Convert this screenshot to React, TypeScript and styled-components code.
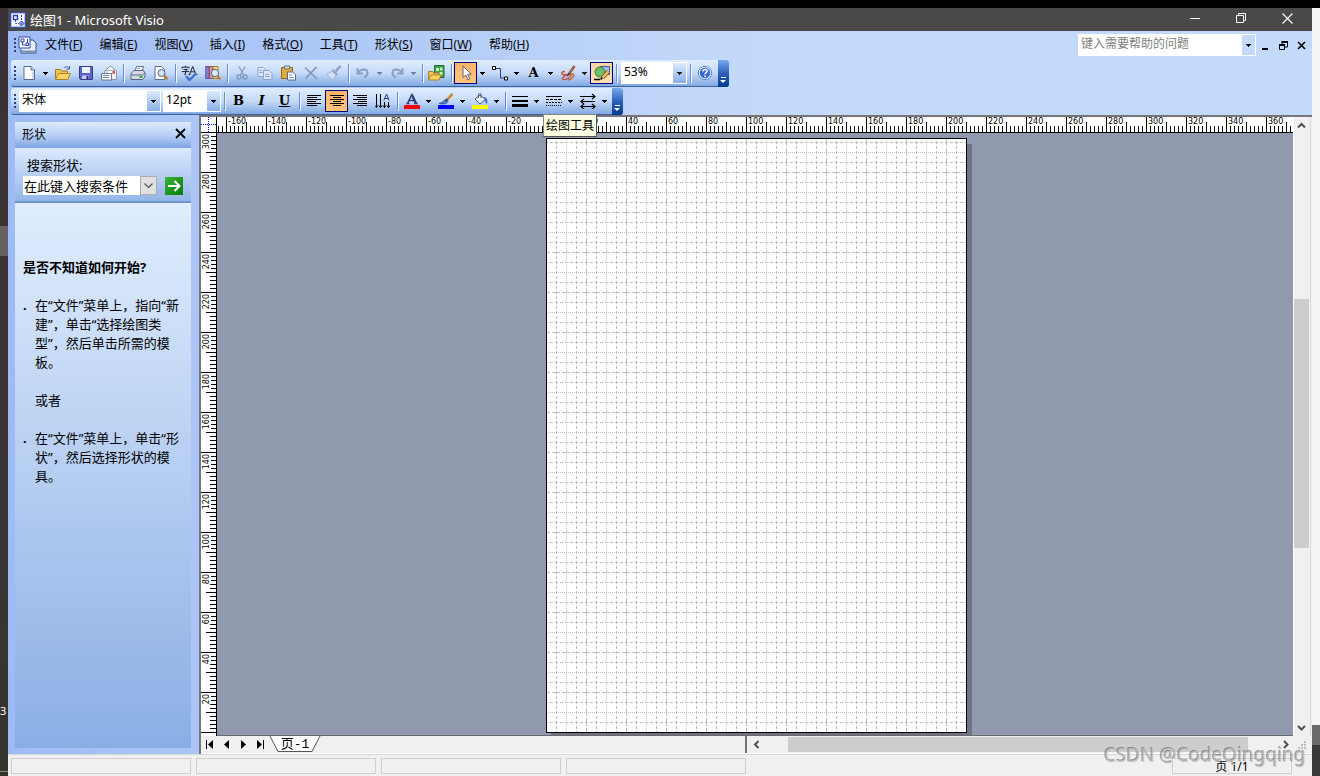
import React from "react";
import styled, { createGlobalStyle, css } from "styled-components";

const Global = createGlobalStyle`
  *, *::before, *::after { box-sizing: border-box; }
  body { margin: 0; background: #000; font: 12px/16px "Noto Sans", "Noto Sans CJK SC", sans-serif; color: #000; }
  button, input, select { font: inherit; color: inherit; border: 0; padding: 0; margin: 0; background: none; border-radius: 0; outline: 0; }
  button { display: flex; align-items: center; justify-content: center; }
  svg { display: block; flex: none; }
  h2, p, ul { margin: 0; padding: 0; font-size: inherit; }
`;

/* ---------- desktop and window frame ---------- */
const Desktop = styled.div`
  display: flex; height: 100vh; padding-top: 8px; position: relative; overflow: hidden;
`;
const LeftEdge = styled.div`
  width: 8px; flex: none; display: flex; flex-direction: column; overflow: hidden;
  background: linear-gradient(#393135, #3b3434 40%, #34352f); color: #fff; font-size: 11px;
`;
const EdgeBand = styled.div<{ $h?: number; $bg?: string }>`
  height: ${p => (p.$h ? p.$h + "px" : "auto")}; flex: ${p => (p.$h ? "none" : "1")};
  background: ${p => p.$bg ?? "transparent"};
`;
const RightEdge = styled.div`
  width: 8px; flex: none; display: flex; flex-direction: column; background: #f5f5f5;
`;
const Window = styled.div`
  flex: 1; min-width: 0; display: flex; flex-direction: column; background: #f0f0f0;
`;

const TitleBar = styled.header`
  height: 23px; flex: none; display: flex; align-items: center; background: #4b4947; color: #fff; padding: 0 2px;
`;
const Title = styled.h1`
  margin: 0 0 0 4px; flex: 1; font-size: 13px; font-weight: 400; line-height: 16px;
`;
const CaptionButton = styled.button`
  width: 46px; height: 23px; color: #fff; padding-bottom: 2px;
`;

const Chrome = styled.div`
  background: linear-gradient(90deg, #9ebbf4, #c4dafa 58%); flex: none; height: 84px; padding-left: 3px; position: relative;
`;
const MenuBar = styled.nav`
  height: 28px; display: flex; align-items: center; padding: 0 2px 0 3px;
`;
const Menus = styled.div`display: flex; gap: 1px;`;
const MenuItem = styled.button`
  padding: 0 8px; height: 20px; white-space: nowrap;
`;
const Spacer = styled.div`flex: 1;`;
const HelpBox = styled.div`
  width: 178px; height: 22px; background: #fff; padding: 1px; display: flex;
`;
const HelpInput = styled.input`
  flex: 1; min-width: 0; padding: 0 2px 3px;
  &::placeholder { color: #808080; opacity: 1; }
`;
const HelpDrop = styled.button`
  width: 13px; height: 20px; background: #c4dafa;
`;
const DocButton = styled.button`
  width: 18px; height: 20px;
`;

/* ---------- toolbars ---------- */
const Grip = styled.span`
  width: 3px; height: 17px; flex: none; align-self: center;
  background: repeating-linear-gradient(#27418f 0 2px, transparent 2px 4px) 0 1px / 2px 16px no-repeat;
`;
const Toolbar = styled.div`
  width: max-content; height: 27px; margin-top: 1px; display: flex; align-items: center;
  background: linear-gradient(#e0edfe, #c5daf8 50%, #82a9e3); border-bottom: 1px solid #3b619c;
  border-radius: 3px; padding-left: 3px;
`;
const ToolButton = styled.button<{ $on?: "checked" | "hot" }>`
  width: 23px; height: 22px; flex: none; position: relative;
  ${p => p.$on && css`
    border: 1px solid #000080;
    background: ${p.$on === "checked" ? "linear-gradient(#fdb46a, #ffc47c)" : "linear-gradient(#fbd3a0, #ffe0b4)"};
  `}
`;
const DropButton = styled.button`width: 11px; height: 22px; flex: none;`;
const Sep = styled.span`
  width: 6px; height: 19px; flex: none;
  background: linear-gradient(#6a8ccb 0 0) 3px 0 / 1px 18px no-repeat, linear-gradient(#f1f9ff 0 0) 4px 1px / 1px 18px no-repeat;
`;
const Cap = styled.button`
  width: 11px; height: 27px; flex: none; margin: 0 0 -1px 2px; align-items: flex-end; padding-bottom: 3px;
  background: linear-gradient(#76a7f2, #2d5fb8 50%, #003b8d); border-radius: 0 3px 3px 0;
`;
const ComboBox = styled.span<{ $w: number }>`
  width: ${p => p.$w}px; height: 22px; flex: none; margin-left: 2px; padding: 1px; background: #fff; position: relative; display: flex;
`;
const ComboSelect = styled.select`
  appearance: none; flex: 1; padding: 0 14px 2px 2px; line-height: 18px;
`;
const ComboArrow = styled.span`
  position: absolute; right: 1px; top: 1px; width: 13px; height: 20px; pointer-events: none;
  display: flex; align-items: center; justify-content: center; background: linear-gradient(#dcebfe, #8aafe6);
`;
const Tooltip = styled.span`
  position: absolute; left: -48px; top: 51px; z-index: 5; height: 23px; padding: 2px 2px; background: #ffffe1;
  border: 1px solid #8a8a80; border-right-color: #555; border-bottom-color: #555; white-space: nowrap; line-height: 17px;
`;

/* ---------- work area ---------- */
const Work = styled.main`
  flex: 1; min-height: 0; display: flex;
`;
const Pane = styled.aside`
  width: 191px; flex: none; padding: 7px 8px 6px 7px; display: flex; flex-direction: column;
  background: linear-gradient(90deg, #9ebbf4, #abc6f7);
`;
const PaneHead = styled.div`
  height: 26px; display: flex; align-items: center; justify-content: space-between; padding: 0 4px 0 7px;
  background: linear-gradient(#dceafd, #b9d1f7 50%, #7ea5e2);
`;
const PaneTitle = styled.h2`font-weight: 400;`;
const PaneClose = styled.button`width: 14px; height: 20px; padding-bottom: 3px;`;
const SearchArea = styled.form`
  height: 55px; padding: 8px 8px 0; border-bottom: 2px solid #6f96d3; font-size: 13px; line-height: 18px;
  background: linear-gradient(#dceafd, #94b5ea);
`;
const SearchLabel = styled.label`display: block; padding-left: 4px; height: 20px;`;
const SearchRow = styled.div`display: flex; align-items: center;`;
const SearchInput = styled.input`
  flex: 1; min-width: 0; height: 19px; background: #fff; padding: 0 1px 1px;
`;
const SearchDrop = styled.button`
  width: 17px; height: 19px; background: #e1e1e1; border: 1px solid #adadad;
`;
const Go = styled.button`
  width: 18px; height: 18px; margin-left: 8px; background: linear-gradient(135deg, #3cb43c, #067a06);
`;
const PaneBody = styled.div`
  flex: 1; padding: 55px 4px 0 8px; font-size: 13px; line-height: 19px;
  background: linear-gradient(#e0edfe, #8aaee4);
`;
const HintList = styled.ul`
  list-style: none; padding-top: 19px;
`;
const Hint = styled.li<{ $dot?: boolean }>`
  display: flex; margin-bottom: 19px;
  &::before { content: "${p => (p.$dot ? "." : "")}"; width: 12px; flex: none; font-weight: 700; }
`;

const Document = styled.section`
  flex: 1; min-width: 0; display: flex; flex-direction: column; border-top: 2px solid #76767a; border-left: 2px solid #76767a;
`;
const Row = styled.div<{ $grow?: boolean }>`
  display: flex; min-height: 0; flex: ${p => (p.$grow ? "1" : "none")};
`;
const Drawing = styled.div`flex: 1; min-width: 0; display: flex; flex-direction: column;`;
const HRuler = styled.div`
  flex: 1; min-width: 0; height: 16px; display: flex; overflow: hidden; background: #fff; border-bottom: 1px solid #000;
`;
const rulerFont = css`font: 8px/8px "DejaVu Sans", sans-serif;`;
const HCell = styled.span<{ $part?: boolean }>`
  ${rulerFont}
  flex: none; display: flex; align-items: flex-start; padding: 1px 0 0 2px;
  width: ${p => (p.$part ? 9 : 40)}px; height: 15px;
  background:
    linear-gradient(#000 0 0) ${p => (p.$part ? -40 : 0)}px 0 / 1px 15px no-repeat,
    linear-gradient(#000 0 0) ${p => (p.$part ? -40 : 20)}px 5px / 1px 10px no-repeat,
    repeating-linear-gradient(90deg, #000 0 1px, transparent 1px 4px) ${p => (p.$part ? 1 : 0)}px 9px / 100% 6px no-repeat;
`;
const HText = styled.span`height: 8px; background: #fff;`;
const Corner = styled.span`
  width: 16px; height: 16px; flex: none; border-right: 1px solid #000; border-bottom: 1px solid #000;
  background:
    repeating-linear-gradient(90deg, #00f 0 1px, transparent 1px 2px) 0 7px / 15px 1px no-repeat,
    repeating-linear-gradient(#00f 0 1px, transparent 1px 2px) 7px 0 / 1px 15px no-repeat, #fff;
`;
const VRuler = styled.div`
  width: 16px; flex: none; overflow: hidden; background: #fff; border-right: 1px solid #000;
`;
const VCell = styled.div<{ $first?: boolean }>`
  ${rulerFont}
  height: ${p => (p.$first ? 39 : 40)}px; display: flex; padding: ${p => (p.$first ? 1 : 2)}px 0 0 2px; color: #000;
  background:
    linear-gradient(#000 0 0) 0 ${p => (p.$first ? -1 : 0)}px / 15px 1px no-repeat,
    linear-gradient(#000 0 0) 5px ${p => (p.$first ? 19 : 20)}px / 10px 1px no-repeat,
    repeating-linear-gradient(#000 0 1px, transparent 1px 4px) 9px ${p => (p.$first ? -1 : 0)}px / 6px 41px no-repeat;
`;
const VText = styled.span`
  writing-mode: vertical-rl; transform: rotate(180deg); width: 8px; height: max-content; background: #fff;
`;
const Canvas = styled.div`
  flex: 1; min-width: 0; background: #9199ae; overflow: hidden; border-bottom: 1px solid #6b6b6b;
`;
const Sheet = styled.div`
  width: 421px; height: 595px; margin: 5px 0 0 329px; background: #fff; border: 1px solid #000; box-shadow: 5px 6px 0 #6f7488;
`;
const VScroll = styled.div`
  width: 19px; flex: none; display: flex; flex-direction: column; background: #f0f0f0; border-left: 1px solid #fff;
  border-right: 1px solid #f0f0f0; box-shadow: inset -1px 0 #dcdcdc; padding-right: 2px;
`;
const ScrollButton = styled.button<{ $wide?: boolean }>`
  width: ${p => (p.$wide ? 17 : 15)}px; height: ${p => (p.$wide ? 15 : 17)}px; flex: none; color: #505050;
`;
const Track = styled.div<{ $dir: "row" | "column" }>`
  flex: 1; display: flex; flex-direction: ${p => p.$dir};
`;
const Part = styled.span<{ $n: number; $thumb?: boolean }>`
  flex: ${p => p.$n} 1 0; background: ${p => (p.$thumb ? "#cdcdcd" : "transparent")};
`;
const TabRow = styled.div`
  height: 18px; flex: none; display: flex; background: #f0f0f0; border-bottom: 1px solid #fff;
`;
const TabSide = styled.div`
  flex: 0 0 546px; display: flex; border-right: 2px solid #76767a;
`;
const NavButton = styled.button`width: 17px; height: 16px;`;
const Tab = styled.button`
  position: relative; width: 52px; height: 16px; font: 13px/15px "Liberation Mono", "Noto Sans CJK SC", monospace;
  span { position: relative; }
  svg { position: absolute; left: 0; top: 0; }
`;
const HScroll = styled.div`flex: 1; display: flex; padding: 1px 0 1px 1px;`;
const SizeGrip = styled.span`
  width: 16px; flex: none; display: flex; align-items: center; justify-content: center; margin-right: 2px;
`;

const StatusBar = styled.footer`
  height: 22px; flex: none; border-top: 1px solid #d7d7d7; display: flex; gap: 5px; padding: 3px 20px 2px 3px;
`;
const StatusCell = styled.span<{ $w: number }>`
  width: ${p => p.$w}px; border: 1px solid #d0d0d0; flex: none; text-align: center; white-space: nowrap;
`;
const Watermark = styled.span`
  position: absolute; right: 14px; bottom: 7px; font-size: 19px; line-height: 28px; color: rgba(190, 190, 190, 0.85);
  text-shadow: -1px -1px 0 rgba(90, 90, 90, 0.6); pointer-events: none; white-space: nowrap;
`;

/* ---------- icons ---------- */
const Ico = ({ children, w = 16, h = 16 }: { children: React.ReactNode; w?: number; h?: number }) => (
  <svg width={w} height={h} viewBox={`0 0 ${w} ${h}`} fill="none" aria-hidden="true">{children}</svg>
);
const Tri = ({ c = "#000" }: { c?: string }) => (
  <svg width="5" height="3" viewBox="0 0 5 3" shapeRendering="crispEdges" aria-hidden="true"><path d="M0 0h5v1h-1v1h-1v1h-1v-1h-1v-1h-1z" fill={c} /></svg>
);
const Chevron = ({ d }: { d: string }) => (
  <Ico w={9} h={9}><path d={d} stroke="currentColor" strokeWidth="2" /></Ico>
);

const icons: Record<string, React.ReactNode> = {
  new: <Ico><path d="M3 1.500h7l3.500 3.500v9.500H3z" fill="#fff" stroke="#5b6c92" /><path d="M10 1.500V5h3.500" fill="#ccd8ee" stroke="#5b6c92" /><path d="M12 6.500v7" stroke="#c9d6f0" strokeWidth="2" /></Ico>,
  open: <Ico><path d="M.5 14V4.500h5l1 1.500h6v3" fill="#f0c65c" stroke="#a97a1c" /><path d="M.6 14.500 3.500 8.500h12l-3 6z" fill="#fbd468" stroke="#b5811d" /><path d="M9 3c2-2 4-1.500 5 .5M14.500 1v3h-3" stroke="#47628e" /></Ico>,
  save: <Ico><path d="M1.500 1.500h13v13h-12l-1-1z" fill="#5a63c8" stroke="#36398f" /><path d="M4 2h8v6H4z" fill="#eef3ff" /><path d="M4 10.500h7V14H4z" fill="#c7cfe9" /><path d="M8.500 11h2v3h-2z" fill="#2b2f7a" /></Ico>,
  mail: <Ico><path d="M3.500 6 9.500 1l6 5v8.500h-12z" fill="#f3f4f6" stroke="#8992a6" /><path d="M5.500 5.500h8v3h-8z" fill="#fff" stroke="#a5adbd" /><path d="M11.500 6h2.500v2.500h-2.500z" fill="#d0543c" /><path d="M.5 8.500h10v6.500H.5z" fill="#fff" stroke="#6b7894" /><path d="M2 10.500h6M2 12.500h6" stroke="#7384ae" /></Ico>,
  print: <Ico><path d="M5 6 6.500 1.500h7L12 6.500" fill="#fff" stroke="#5f6e8e" /><path d="M1 8.500 4 5.500h9.500L15 8v4l-2.500 2.500H1z" fill="#d5dae6" stroke="#5a6683" /><path d="M1 10h11.500L15 8" stroke="#5a6683" /><path d="M9.500 11h3v2h-3z" fill="#26b430" /><path d="M6.500 3.500h4" stroke="#a6b2cc" /></Ico>,
  preview: <Ico><path d="M2 1.500h6.500l3 3v10H2z" fill="#fff" stroke="#5b6c92" /><circle cx="8.500" cy="8" r="3.500" fill="#cfe4fa" stroke="#566582" /><path d="m11.200 10.800 3.300 3.400" stroke="#c47a2c" strokeWidth="2.400" /></Ico>,
  spell: <Ico w={18}><path d="M1 3.500V2.200h7v1.300M4.500.8v1.400M2.500 4.500h4L4.500 6v3.300H3.200M.8 6.600h7.500" stroke="#1c2440" /><path d="m8.500 9.500 3.200-8 3.200 8M9.700 6.800h4M7.500 9.500h2M14 9.500h2.500" stroke="#1c2440" /><path d="m5 11 3.500 4L15 8.500" stroke="#3f6fc8" strokeWidth="2.400" /></Ico>,
  research: <Ico><path d="M.8 1.500h3.400v12H.8z" fill="#8a7fd0" stroke="#554a9c" /><path d="M4.500 1.500h3.200v12H4.500z" fill="#d99aa5" stroke="#8c4c62" /><path d="M8 1.500h5v12H8z" fill="#efd28a" stroke="#a58036" /><circle cx="10" cy="8" r="3.600" fill="#dcecfb" stroke="#566582" /><path d="m12.500 11 2.700 3.400" stroke="#c47a2c" strokeWidth="2.200" /></Ico>,
  cut: <Ico><path d="M5 1.500 9.500 10M11 1.500 6.500 10" stroke="#8e9fc4" strokeWidth="1.400" /><circle cx="5" cy="12" r="2" stroke="#8496bf" strokeWidth="1.400" /><circle cx="11" cy="12" r="2" stroke="#8496bf" strokeWidth="1.400" /></Ico>,
  copy: <Ico><path d="M1 2.500h5.500l2.500 2.500v6.500H1z" fill="#dbe6f8" stroke="#93a5cb" /><path d="M6.500 5.500H12l3 3v6H6.500z" fill="#dbe6f8" stroke="#93a5cb" /><path d="M2.500 5.500h3M2.500 7.500h3M8 9.500h4M8 11.500h5" stroke="#93a5cb" /></Ico>,
  paste: <Ico><path d="M1.500 2.500h11v11h-11z" fill="#e3ac3a" stroke="#93661a" /><path d="M4.500 1h5v3h-5z" fill="#d9dde6" stroke="#6d7078" /><path d="M7.500 7h5l3 2.500V15h-8z" fill="#fff" stroke="#53658e" /><path d="M9 10h3.500M9 12.500h5" stroke="#7f93c2" /></Ico>,
  delete: <Ico><path d="M2 2.500 14 14M13.500 2 2.500 13.500" stroke="#8195c0" strokeWidth="1.700" /></Ico>,
  brush: <Ico><path d="m14.500 1-5 5.500" stroke="#8fa1c8" strokeWidth="2.600" /><path d="m7 4 5 5-1.500 1.500L6 5.500z" fill="#8fa1c8" /><path d="M5.500 6 10 10.500 6.500 15 1 9.500z" fill="#d5e1f4" stroke="#9badd0" /></Ico>,
  undo: <Ico><path d="M2.500 3v5.500H8M3 8c2-4 9-5 9.500-.5.200 2.500-1.500 4-3.500 5" stroke="#8a9fca" strokeWidth="2" /></Ico>,
  redo: <Ico><path d="M13.500 3v5.500H8M13 8c-2-4-9-5-9.500-.5-.2 2.500 1.500 4 3.500 5" stroke="#8a9fca" strokeWidth="2" /></Ico>,
  shapes: <Ico w={17}><path d="M6.500.5h9.500v12H6.500z" fill="#3da24b" stroke="#1d6b2c" /><path d="M8 3h3v3H8zM12 2.500h2.500v3H12zM11.500 7h3v3h-3z" fill="#c9f0b8" /><path d="M.7 14.500V6.500h4l1 1.500h5v2" fill="#f0c65c" stroke="#a97a1c" /><path d="m.8 15 2.500-5h10l-2.500 5z" fill="#fbd468" stroke="#b5811d" /></Ico>,
  pointer: <Ico><path d="M5 1v11.500l2.700-2.500 2 4.800 2-.9-2-4.700 3.600-.1z" fill="#fff" stroke="#5f6575" /></Ico>,
  connector: <Ico w={18}><path d="M4 3.500h5.500v9.500h4" stroke="#1f3d88" /><path d="M1.500 1.500h3v3h-3zM13.500 12h3v3h-3z" fill="#fff" stroke="#000" /></Ico>,
  ink: <Ico><path d="M5 6.500C2 6 .5 9 3 9.500s7-1 8 .5-5 5-7.500 4.500S3 11 8 9.500s7.500 0 5 2.500-4.500 3-5.500 2.500" stroke="#c85840" strokeWidth="1.400" /><path d="m14.500 1-5.500 8" stroke="#a85e3e" strokeWidth="2.600" /><path d="m9.400 8.200-2 3" stroke="#4b3c38" strokeWidth="1.500" /></Ico>,
  drawing: <Ico w={18}><path d="M7.500 1.500h9v8h-9z" fill="#9fc0f0" stroke="#3c5f9f" /><circle cx="7" cy="7" r="5" fill="#6fc06b" stroke="#2f7d39" /><path d="M1 14.500h6" stroke="#000" strokeWidth="1.500" /><path d="m15.500 6.500-6 6" stroke="#7d5a22" strokeWidth="4" /><path d="m15.500 6.500-6 6" stroke="#f0c272" strokeWidth="2.400" /><path d="m9.500 12.500-2 2" stroke="#000" strokeWidth="1.500" /></Ico>,
  help: <Ico><circle cx="8" cy="8" r="6.700" fill="#fff" stroke="#5b83cd" /><circle cx="8" cy="8" r="5.400" fill="#3c70d0" /><path d="M6 6.400c0-2.800 4.200-2.500 4.200-.3 0 1.500-2.100 1.500-2.100 3.200M8.100 10.500v1.500" stroke="#fff" strokeWidth="1.500" /></Ico>,
  left: <Ico><path d="M1 2.500h14M1 4.500h10M1 6.500h14M1 8.500h9M1 10.500h14M1 12.500h10" stroke="#000" /></Ico>,
  center: <Ico><path d="M1 2.500h14M4 4.500h8M1 6.500h14M4 8.500h8M1 10.500h14M4 12.500h8" stroke="#000" /></Ico>,
  right: <Ico><path d="M1 2.500h14M5 4.500h10M1 6.500h14M6 8.500h9M1 10.500h14M5 12.500h10" stroke="#000" /></Ico>,
  vertical: <Ico><path d="M1.500 1v13M5.500 1v13M9.500 9v6M13.500 9v6" stroke="#000" /><path d="m0 12.500 1.500 2 1.500-2M4 12.500l1.500 2 1.500-2M8 12.500l1.500 2 1.500-2M12 12.500l1.500 2 1.500-2" stroke="#000" /><path d="m8.800 7.500 2.700-6.500 2.700 6.500M9.800 5.500h3.400" stroke="#26417f" /></Ico>,
  fontColor: <Ico><path d="m3.500 10.500 4.300-9 4.300 9M5.300 7.500h5.200M2.500 10.500h3M10 10.500h3.500" stroke="#2a4380" strokeWidth="1.500" /><path d="m8 2 4 8.500" stroke="#2a4380" strokeWidth="2.400" /><path d="M0 12h16v4H0z" fill="#f00" /></Ico>,
  lineColor: <Ico><path d="M1 10.500c4-.5 4-3 7-4l2 2c-2 3-5 2.500-9 2z" fill="#4d83d8" stroke="#2b4f98" /><path d="m14.500.8-6 6.500" stroke="#c98b35" strokeWidth="2.600" /><path d="m9.500 6-2 2.500" stroke="#32507f" strokeWidth="2" /><path d="M0 12h16v4H0z" fill="#00f" /></Ico>,
  fill: <Ico><path d="m3 6 5-4 5.500 4.500-5.500 4.500z" fill="#e9eef7" stroke="#44597f" /><path d="M6.500 5V1.500c0-1.500 2.500-1.500 2.500 0V5" stroke="#44597f" /><path d="M12 4c3 .5 4 3 3 7-1.500-.5-2-3-2.500-4.500z" fill="#3f75cf" /><path d="M0 12h16v4H0z" fill="#ff0" /></Ico>,
  weight: <Ico><path d="M0 3.500h16" stroke="#000" /><path d="M0 8h16" stroke="#000" strokeWidth="2" /><path d="M0 12.500h16" stroke="#000" strokeWidth="3" /></Ico>,
  pattern: <Ico><path d="M0 3.500h16" stroke="#000" /><path d="M0 6.500h16" stroke="#000" strokeDasharray="3 1" /><path d="M0 9.500h16" stroke="#000" strokeDasharray="2 1" /><path d="M0 12.500h16" stroke="#000" strokeDasharray="1 1" /></Ico>,
  ends: <Ico><path d="M0 3.500h15M1 8.500h14M1 13.500h14" stroke="#000" /><path d="m12 1 3 2.500L12 6M4 6 1 8.500 4 11M4 11 1 13.500 4 16M12 11l3 2.500-3 2.500" stroke="#000" strokeWidth="1.200" /></Ico>,
};
const CapGlyph = () => <Ico w={7} h={8}><path d="M1 1.500h5" stroke="#fff" /><path d="M0 4h6L3 7z" fill="#fff" /></Ico>;

const LetterFace = styled.span<{ $i?: boolean; $u?: boolean }>`
  font: ${p => (p.$i ? "italic " : "")}700 13px/16px "DejaVu Serif", serif;
  text-decoration: ${p => (p.$u ? "underline" : "none")};
`;

/* ---------- small compositions ---------- */
const Tool = ({ icon, label, drop, dim, on, children }: {
  icon?: string; label: string; drop?: boolean; dim?: boolean; on?: "checked" | "hot"; children?: React.ReactNode;
}) => (
  <>
    <ToolButton type="button" aria-label={label} $on={on}>{icon ? icons[icon] : null}{children}</ToolButton>
    {drop && <DropButton type="button" aria-label={label + "选项"}><Tri c={dim ? "#6c7fa8" : "#000"} /></DropButton>}
  </>
);
const Combo = ({ label, value, w }: { label: string; value: string; w: number }) => (
  <ComboBox $w={w}>
    <ComboSelect aria-label={label} defaultValue={value}><option>{value}</option></ComboSelect>
    <ComboArrow><Tri /></ComboArrow>
  </ComboBox>
);

const menus: [string, string][] = [
  ["文件", "F"], ["编辑", "E"], ["视图", "V"], ["插入", "I"], ["格式", "O"], ["工具", "T"], ["形状", "S"], ["窗口", "W"], ["帮助", "H"],
];
const hLabels = Array.from({ length: 27 }, (_, i) => -160 + i * 20);
const vLabels = Array.from({ length: 16 }, (_, i) => 300 - i * 20);

const GridLines = () => (
  <svg width="419" height="593" shapeRendering="crispEdges" aria-hidden="true">
    <defs>
      <pattern id="grid" width="40" height="40" patternUnits="userSpaceOnUse" patternTransform="translate(-1 -7)">
        <g stroke="#c0c0c0" fill="none">
          <path d="M.5 0v40M0 .5h40" strokeDasharray="8 2" strokeDashoffset="4" />
          <path d="M10.500 0v40M30.500 0v40M0 10.500h40M0 30.500h40" strokeDasharray="3 2" strokeDashoffset="1" />
          <path d="M20.500 0v40M0 20.500h40" strokeDasharray="1 1" />
        </g>
      </pattern>
    </defs>
    <rect width="419" height="593" fill="url(#grid)" />
  </svg>
);

export default function App() {
  return (
    <Desktop>
      <Global />
      <LeftEdge>
        <EdgeBand $h={218} />
        <EdgeBand $h={30} $bg="#656162" />
        <EdgeBand $h={447} />
        <span>3</span>
        <EdgeBand />
        <EdgeBand $h={1} $bg="#8a8a86" />
        <EdgeBand $h={4} />
      </LeftEdge>

      <Window>
        <TitleBar>
          <Ico><path d="M0 0h16v16H0z" fill="#3550b5" /><path d="M1.500 1.500h13v13h-13z" fill="#fff" stroke="#b9c6f2" /><path d="M3.500 3.500h4v4h-4z" stroke="#2c45b0" strokeWidth="1.500" /><path d="M5.500 8v3.500h3M11.500 3v6" stroke="#2c45b0" strokeDasharray="2 1" /><path d="m11.500 9 2.500 2.500-2.500 2.500L9 11.500z" fill="#7d94e6" stroke="#2c45b0" /></Ico>
          <Title>绘图1 - Microsoft Visio</Title>
          <CaptionButton type="button" aria-label="最小化"><Ico w={11} h={11}><path d="M0 5.500h10" stroke="#fff" /></Ico></CaptionButton>
          <CaptionButton type="button" aria-label="向下还原"><Ico w={11} h={11}><path d="M.5 2.500h7v7h-7zM2.500 2.500V.5h7v7h-2" stroke="#fff" /></Ico></CaptionButton>
          <CaptionButton type="button" aria-label="关闭"><Ico w={11} h={11}><path d="m.5.5 10 10M10.500.5l-10 10" stroke="#fff" strokeWidth="1.200" /></Ico></CaptionButton>
        </TitleBar>

        <Chrome>
          <MenuBar>
            <Grip />
            <Ico w={20} h={18}><path d="M7 4h9l3 3v10H4v-4" fill="#e8eefc" stroke="#36507f" /><path d="M5 15.500h13" stroke="#7d8fb8" strokeWidth="2" /><path d="M2 1h11v11H2z" fill="#fff" stroke="#2c45b0" /><path d="M4 3h3v3H4zM9 7h2.500v2.500H9zM5.500 6v3H9M10.500 3v4" stroke="#2c45b0" /></Ico>
            <Menus>
              {menus.map(([t, k]) => <MenuItem type="button" key={k}>{t}(<u>{k}</u>)</MenuItem>)}
            </Menus>
            <Spacer />
            <HelpBox>
              <HelpInput aria-label="帮助" placeholder="键入需要帮助的问题" />
              <HelpDrop type="button" aria-label="帮助选项"><Tri /></HelpDrop>
            </HelpBox>
            <DocButton type="button" aria-label="最小化文档"><Ico w={8} h={9}><path d="M1 7h6v2H1z" fill="#000" /></Ico></DocButton>
            <DocButton type="button" aria-label="还原文档"><Ico w={9} h={9}><path d="M3 1h5.500v5H6M3 0v3M.5 4h5v4.500h-5z" stroke="#000" /><path d="M3 1h6M0 4h6" stroke="#000" strokeWidth="2" /></Ico></DocButton>
            <DocButton type="button" aria-label="关闭文档"><Ico w={9} h={9}><path d="m1 1 7 7M8 1 1 8" stroke="#000" strokeWidth="1.600" /></Ico></DocButton>
          </MenuBar>

          <Toolbar role="toolbar" aria-label="常用">
            <Grip />
            <Tool icon="new" label="新建" drop />
            <Tool icon="open" label="打开" />
            <Tool icon="save" label="保存" />
            <Tool icon="mail" label="电子邮件" />
            <Sep />
            <Tool icon="print" label="打印" />
            <Tool icon="preview" label="打印预览" />
            <Sep />
            <Tool icon="spell" label="拼写检查" />
            <Tool icon="research" label="信息检索" />
            <Sep />
            <Tool icon="cut" label="剪切" />
            <Tool icon="copy" label="复制" />
            <Tool icon="paste" label="粘贴" />
            <Tool icon="delete" label="删除" />
            <Tool icon="brush" label="格式刷" />
            <Sep />
            <Tool icon="undo" label="撤消" drop dim />
            <Tool icon="redo" label="恢复" drop dim />
            <Sep />
            <Tool icon="shapes" label="形状" />
            <Sep />
            <Tool icon="pointer" label="指针工具" drop on="checked" />
            <Tool icon="connector" label="连接线工具" drop />
            <Tool label="文本工具" drop><LetterFace>A</LetterFace></Tool>
            <Tool icon="ink" label="墨迹工具" drop />
            <Tool icon="drawing" label="绘图工具" on="hot"><Tooltip role="tooltip">绘图工具</Tooltip></Tool>
            <Sep />
            <Combo label="显示比例" value="53%" w={66} />
            <Sep />
            <Tool icon="help" label="帮助" />
            <Cap type="button" aria-label="工具栏选项"><CapGlyph /></Cap>
          </Toolbar>

          <Toolbar role="toolbar" aria-label="格式">
            <Grip />
            <Combo label="字体" value="宋体" w={142} />
            <Combo label="字号" value="12pt" w={58} />
            <Sep />
            <Tool label="加粗"><LetterFace>B</LetterFace></Tool>
            <Tool label="倾斜"><LetterFace $i>I</LetterFace></Tool>
            <Tool label="下划线"><LetterFace $u>U</LetterFace></Tool>
            <Sep />
            <Tool icon="left" label="左对齐" />
            <Tool icon="center" label="居中" on="checked" />
            <Tool icon="right" label="右对齐" />
            <Tool icon="vertical" label="竖排文字" />
            <Sep />
            <Tool icon="fontColor" label="文字颜色" drop />
            <Tool icon="lineColor" label="线条颜色" drop />
            <Tool icon="fill" label="填充颜色" drop />
            <Sep />
            <Tool icon="weight" label="线条粗细" drop />
            <Tool icon="pattern" label="线型" drop />
            <Tool icon="ends" label="线端" drop />
            <Cap type="button" aria-label="工具栏选项"><CapGlyph /></Cap>
          </Toolbar>
        </Chrome>

        <Work>
          <Pane>
            <PaneHead>
              <PaneTitle>形状</PaneTitle>
              <PaneClose type="button" aria-label="关闭形状窗格"><Ico w={11} h={11}><path d="m1 1 9 9M10 1 1 10" stroke="#000" strokeWidth="1.800" /></Ico></PaneClose>
            </PaneHead>
            <SearchArea>
              <SearchLabel htmlFor="shape-search">搜索形状:</SearchLabel>
              <SearchRow>
                <SearchInput id="shape-search" defaultValue="在此键入搜索条件" />
                <SearchDrop type="button" aria-label="搜索记录"><Ico w={9} h={6}><path d="m.5.5 4 4 4-4" stroke="#505050" strokeWidth="1.200" /></Ico></SearchDrop>
                <Go type="button" aria-label="搜索"><Ico w={14} h={14}><path d="M1 7h11M7.500 2l5 5-5 5" stroke="#fff" strokeWidth="2" /></Ico></Go>
              </SearchRow>
            </SearchArea>
            <PaneBody>
              <h2>是否不知道如何开始?</h2>
              <HintList>
                <Hint $dot>在“文件”菜单上，指向“新建”，单击“选择绘图类型”，然后单击所需的模板。</Hint>
                <Hint>或者</Hint>
                <Hint $dot>在“文件”菜单上，单击“形状”，然后选择形状的模具。</Hint>
              </HintList>
            </PaneBody>
          </Pane>

          <Document>
            <Row $grow>
              <Drawing>
                <Row>
                  <Corner />
                  <HRuler>
                    <HCell $part />
                    {hLabels.map(n => <HCell key={n}><HText>{n}</HText></HCell>)}
                  </HRuler>
                </Row>
                <Row $grow>
                  <VRuler>
                    {vLabels.map((n, i) => <VCell key={n} $first={i === 0}>{n > 0 && <VText>{n}</VText>}</VCell>)}
                  </VRuler>
                  <Canvas><Sheet><GridLines /></Sheet></Canvas>
                </Row>
              </Drawing>
              <VScroll>
                <ScrollButton type="button" aria-label="向上滚动"><Chevron d="M1 6.500 4.500 3 8 6.500" /></ScrollButton>
                <Track $dir="column"><Part $n={165} /><Part $n={248} $thumb /><Part $n={171} /></Track>
                <ScrollButton type="button" aria-label="向下滚动"><Chevron d="M1 3 4.500 6.500 8 3" /></ScrollButton>
              </VScroll>
            </Row>
            <TabRow>
              <TabSide>
                <NavButton type="button" aria-label="第一页"><Ico w={9} h={9}><path d="M1.500 0v9" stroke="#000" /><path d="M8 0v9L3 4.500z" fill="#000" /></Ico></NavButton>
                <NavButton type="button" aria-label="上一页"><Ico w={9} h={9}><path d="M7 0v9L2 4.500z" fill="#000" /></Ico></NavButton>
                <NavButton type="button" aria-label="下一页"><Ico w={9} h={9}><path d="M2 0v9l5-4.500z" fill="#000" /></Ico></NavButton>
                <NavButton type="button" aria-label="最后一页"><Ico w={9} h={9}><path d="M7.500 0v9" stroke="#000" /><path d="M1 0v9l5-4.500z" fill="#000" /></Ico></NavButton>
                <Tab type="button"><Ico w={52}><path d="M1 0l8 15.500h34L51 0" fill="#fff" stroke="#555" /></Ico><span>页-1</span></Tab>
              </TabSide>
              <HScroll>
                <ScrollButton $wide type="button" aria-label="向左滚动"><Chevron d="M6.500 1 3 4.500 6.500 8" /></ScrollButton>
                <Track $dir="row"><Part $n={23} /><Part $n={461} $thumb /><Part $n={29} /></Track>
                <ScrollButton $wide type="button" aria-label="向右滚动"><Chevron d="M3 1l3.500 3.500L3 8" /></ScrollButton>
              </HScroll>
              <SizeGrip><Ico w={10} h={10}><path d="M7 1h2v2H7zM4 4h2v2H4zM7 4h2v2H7zM1 7h2v2H1zM4 7h2v2H4zM7 7h2v2H7z" fill="#bdbdbd" /></Ico></SizeGrip>
            </TabRow>
          </Document>
        </Work>

        <StatusBar>
          <StatusCell $w={180} /><StatusCell $w={180} /><StatusCell $w={180} /><StatusCell $w={180} />
          <Spacer />
          <StatusCell $w={120}>页 1/1</StatusCell>
        </StatusBar>
      </Window>

      <RightEdge>
        <EdgeBand />
        <EdgeBand $h={20} $bg="#6a6a6a" />
        <EdgeBand $h={31} $bg="#3a3a3a" />
      </RightEdge>
      <Watermark>CSDN @CodeQingqing</Watermark>
    </Desktop>
  );
}
